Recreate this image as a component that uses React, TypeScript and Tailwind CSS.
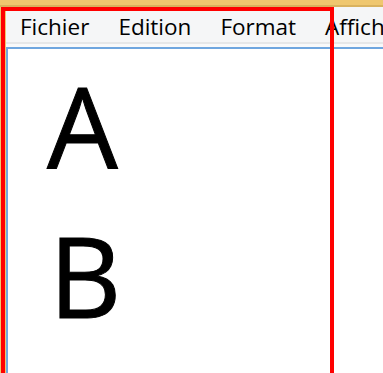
const menu = ['Fichier', 'Edition', 'Format', 'Affichage'];

export default function App() {
  return (
    <div
      className="relative w-[383px] h-[373px] overflow-hidden bg-[#efc76f] flex flex-col"
      style={{ fontFamily: '"Open Sans", "Noto Sans", sans-serif' }}
    >
      {/* window frame top */}
      <div className="h-[7px] shrink-0 border-b-2 border-[#d9b25e]" />

      <div className="flex-1 flex flex-col pl-[6px] min-h-0">
        {/* menu bar */}
        <div className="h-[35px] shrink-0 bg-[#f5f6f7] flex items-end pb-[4px] pl-[14px] gap-[29px] text-[22.5px] leading-none text-black whitespace-nowrap">
          {menu.map((m) => (
            <span key={m}>{m}</span>
          ))}
        </div>
        <div className="h-[2px] shrink-0 bg-[#e6e7e8]" />
        <div className="h-[3px] shrink-0 bg-[#f8f9fa]" />

        {/* text area */}
        <div className="flex-1 bg-white border-t-2 border-l-2 border-[#6fa6df] pl-[39px] pt-[1px] text-black">
          <div className="text-[112px] leading-[150px] [-webkit-text-stroke:1px_black]">A</div>
          <div className="text-[112px] leading-[150px] pl-[2px] [-webkit-text-stroke:1px_black]">B</div>
        </div>
      </div>

      {/* red annotation box */}
      <div className="absolute left-[1px] top-[7px] w-[333px] h-[380px] border-4 border-[#ff0000] pointer-events-none" />
    </div>
  );
}
